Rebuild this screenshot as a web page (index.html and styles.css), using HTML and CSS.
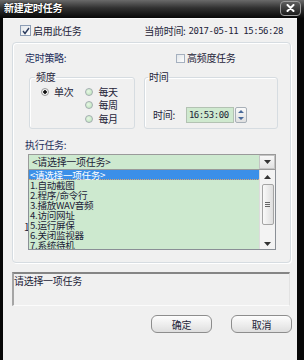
FILE: index.html
```html
<!DOCTYPE html>
<html lang="zh-CN">
<head>
    <meta charset="UTF-8">
    <title>新建定时任务</title>
    <link rel="stylesheet" href="styles.css">
</head>
<body>

<div class="window">
    <div class="titlebar">
        <span class="title">新建定时任务</span>
        <span class="close-btn">
            <svg width="9" height="8" viewBox="0 0 9 8"><path d="M1.5 1 L7.5 7 M7.5 1 L1.5 7" stroke="#fff" stroke-width="2" stroke-linecap="round"/></svg>
        </span>
    </div>

    <div class="client">
        <div class="top-row">
            <div class="check">
                <span class="box big">
                    <svg width="8" height="8" viewBox="0 0 8 8"><path d="M1 4 L3 6.5 L7 1" fill="none" stroke="#2b3b5e" stroke-width="1.4"/></svg>
                </span>
                启用此任务
            </div>
            <div class="now">当前时间:<span class="mono now-time">2017-05-11 15:56:28</span></div>
        </div>

        <div class="panel">
            <div class="panel-head">
                <span class="label">定时策略:</span>
                <div class="check"><span class="box small"></span>高频度任务</div>
            </div>

            <div class="groups">
                <fieldset class="group freq">
                    <legend>频度</legend>
                    <div class="radios">
                        <div class="col">
                            <div class="radio-row"><span class="radio on"></span>单次</div>
                        </div>
                        <div class="col second">
                            <div class="radio-row"><span class="radio"></span>每天</div>
                            <div class="radio-row"><span class="radio"></span>每周</div>
                            <div class="radio-row"><span class="radio"></span>每月</div>
                        </div>
                    </div>
                </fieldset>
                <fieldset class="group time">
                    <legend>时间</legend>
                    <div class="time-row">
                        <span>时间:</span>
                        <span class="time-input mono">16:53:00</span>
                        <span class="spin">
                            <svg width="8" height="14" viewBox="0 0 8 14"><path d="M1 5 L4 2 L7 5 Z M1 9 L4 12 L7 9 Z" fill="#4a6a9a"/></svg>
                        </span>
                    </div>
                </fieldset>
            </div>

            <div class="label task-label">执行任务:</div>
            <div class="combo-wrap">
                <div class="combo">
                    <span class="combo-text">&lt;请选择一项任务&gt;</span>
                    <span class="drop-btn">
                        <svg width="7" height="4" viewBox="0 0 7 4"><path d="M0 0 L7 0 L3.5 4 Z" fill="#333"/></svg>
                    </span>
                </div>

                <!-- open dropdown list -->
                <div class="list">
                    <div class="items">
                        <div class="item selected">&lt;请选择一项任务&gt;</div>
                        <div class="item">1.自动截图</div>
                        <div class="item">2.程序/命令行</div>
                        <div class="item">3.播放WAV音频</div>
                        <div class="item">4.访问网址</div>
                        <div class="item">5.运行屏保</div>
                        <div class="item">6.关闭监视器</div>
                        <div class="item">7.系统待机</div>
                    </div>
                    <div class="scrollbar">
                        <svg width="7" height="4" viewBox="0 0 7 4"><path d="M0 4 L7 4 L3.5 0 Z" fill="#333"/></svg>
                        <div class="thumb"><span></span><span></span><span></span></div>
                        <svg class="down" width="7" height="4" viewBox="0 0 7 4"><path d="M0 0 L7 0 L3.5 4 Z" fill="#333"/></svg>
                    </div>
                </div>
            </div>
            <div class="under">1</div>
        </div>

        <div class="status">请选择一项任务</div>

        <div class="buttons">
            <button class="btn">确定</button>
            <button class="btn">取消</button>
        </div>
    </div>
</div>

</body>
</html>
```

FILE: styles.css
```css
* {
    box-sizing: border-box;
}

body {
    margin: 0;
    background: #000;
    font-family: "Noto Sans CJK SC", sans-serif;
    font-size: 10px;
    letter-spacing: -0.3px;
    color: #1d2338;
}

.mono {
    font-family: "DejaVu Sans Mono", monospace;
    font-size: 9px;
    letter-spacing: -0.45px;
}

.window {
    width: 304px;
    height: 360px;
    display: flex;
    flex-direction: column;
    background: #060606;
}

/* Title bar */
.titlebar {
    height: 18px;
    display: flex;
    align-items: center;
    justify-content: space-between;
    padding: 0 3px 0 4px;
    background: linear-gradient(#6a6a6a, #303030 45%, #080808);
}

.title {
    color: #fff;
    font-weight: bold;
    line-height: 12px;
    margin-top: -2px;
    text-shadow: 0 0 2px #000;
}

.close-btn {
    width: 21px;
    height: 15px;
    margin-top: -2px;
    display: flex;
    align-items: center;
    justify-content: center;
    border: 1px solid #9c9c9c;
    border-radius: 4px;
    background: linear-gradient(#5e5e5e, #1c1c1c);
}

/* Client area */
.client {
    flex: 1;
    margin: 0 7px 0 3px;
    display: flex;
    flex-direction: column;
    background: #f0f0f0;
    border-top: 1px solid #fbfbfb;
}

.top-row {
    height: 23px;
    display: flex;
    align-items: center;
    justify-content: space-between;
    padding: 0 14px 0 17px;
}

.check {
    display: flex;
    align-items: center;
    line-height: 12px;
}

.box {
    display: flex;
    align-items: center;
    justify-content: center;
    border: 1px solid #8c9db5;
    background: linear-gradient(135deg, #e2e6ea, #fdfdfd);
    margin-right: 2px;
}

.box.big {
    width: 11px;
    height: 11px;
}

.box.small {
    width: 9px;
    height: 9px;
    border-color: #a5b0bf;
}

.now {
    display: flex;
    align-items: center;
    line-height: 12px;
}

.now-time {
    margin-left: 3px;
}

/* Strategy panel */
.panel {
    width: 279px;
    height: 221px;
    margin-left: 9px;
    padding: 9px 0 0 12px;
    border: 1px solid #d6dce1;
    border-radius: 4px;
    box-shadow: inset 1px 1px 0 #fff, 1px 1px 0 #fff;
}

.panel-head {
    display: grid;
    grid-template-columns: 151px auto;
    align-items: center;
    height: 12px;
    line-height: 12px;
}

.label {
    color: #1f2f5c;
}

.groups {
    display: flex;
    gap: 9px;
    margin: 7px 0 0 4px;
}

.group {
    margin: 0;
    padding: 0;
    height: 58px;
    border: 1px solid #d6dce1;
    border-radius: 3px;
    box-shadow: inset 1px 1px 0 #fff;
}

.group legend {
    padding: 0 1px;
    line-height: 12px;
}

.freq {
    width: 106px;
}

.freq legend {
    margin-left: 5px;
}

.time {
    width: 134px;
}

.time legend {
    margin-left: 3px;
}

.radios {
    display: flex;
    padding: 2px 0 0 11px;
}

.col.second {
    margin-left: 12px;
}

.radio-row {
    height: 13.5px;
    display: flex;
    align-items: center;
    line-height: 12px;
}

.radio {
    width: 8px;
    height: 8px;
    margin-right: 5px;
    border-radius: 50%;
    border: 1px solid #a3aeb0;
    background: radial-gradient(circle at 40% 40%, #e6f6e4, #b9e2b8);
}

.radio.on {
    background: radial-gradient(circle, #111 0 1.5px, #f2f2f2 2px);
    border-color: #9a9a9a;
}

.time-row {
    display: flex;
    align-items: center;
    height: 16px;
    margin-top: 24px;
    padding-left: 8px;
    line-height: 12px;
}

.time-input {
    width: 48px;
    height: 16px;
    margin-left: 11px;
    padding-left: 2px;
    line-height: 14px;
    border: 1px solid #b3c2b3;
    background: #cfe9cf;
}

.spin {
    width: 12px;
    height: 16px;
    margin-left: 1px;
    display: flex;
    align-items: center;
    justify-content: center;
    border: 1px solid #a8b0b8;
    border-radius: 2px;
    background: linear-gradient(#fafafa, #e0e0e0);
}

.task-label {
    margin-top: 10px;
    line-height: 12px;
}

/* Combo box */
.combo-wrap {
    position: relative;
    z-index: 1;
    width: 248px;
    margin: 3px 0 0 3px;
}

.combo {
    height: 16px;
    display: flex;
    border: 1px solid #9a9a9a;
    background: #cde9cf;
}

.combo-text {
    flex: 1;
    padding-left: 3px;
    line-height: 14px;
}

.drop-btn {
    width: 16px;
    display: flex;
    align-items: center;
    justify-content: center;
    border: 1px solid #c4c4c4;
    background: linear-gradient(#f8f8f8, #e2e2e2);
}

.list {
    position: absolute;
    top: 16px;
    left: 0;
    width: 248px;
    height: 80px;
    display: flex;
    overflow: hidden;
    border: 1px solid #8a8f96;
    border-top: none;
    background: #cde9cf;
}

.items {
    flex: 1;
    font-size: 9.6px;
}

.item {
    height: 10px;
    line-height: 10px;
    padding-left: 1px;
    white-space: nowrap;
}

.item.selected {
    background: #3b8fe8;
    color: #fff;
    border-bottom: 1px dotted #d9a46a;
}

.scrollbar {
    width: 16px;
    display: flex;
    flex-direction: column;
    align-items: center;
    padding-top: 5px;
    border-left: 1px solid #dcdcdc;
    background: #f3f3f3;
}

.thumb {
    width: 12px;
    height: 41px;
    margin-top: 5px;
    display: flex;
    flex-direction: column;
    align-items: center;
    justify-content: center;
    gap: 1px;
    border: 1px solid #a5a5a5;
    border-radius: 2px;
    background: linear-gradient(90deg, #fafafa, #dedede);
}

.thumb span {
    width: 5px;
    height: 1px;
    background: #666;
}

.scrollbar .down {
    margin-top: 17px;
}

.under {
    margin: 51px 0 0 -1px;
    line-height: 12px;
}

/* Status box */
.status {
    width: 278px;
    height: 34px;
    margin: 9px 0 0 9px;
    line-height: 13px;
    border-top: 2px solid #858585;
    border-left: 2px solid #a5a5a5;
    border-right: 1px solid #e2e2e2;
    border-bottom: 1px solid #fbfbfb;
}

/* Buttons */
.buttons {
    display: flex;
    justify-content: flex-end;
    gap: 19px;
    margin-top: 9px;
    padding-right: 5px;
}

.btn {
    width: 61px;
    height: 18px;
    padding: 0;
    font-family: inherit;
    font-size: 10px;
    letter-spacing: -0.3px;
    color: #1d2338;
    border: 1px solid #8d8d8d;
    border-radius: 6px;
    background: linear-gradient(#fdfdfd, #ebebeb 60%, #dedede);
}
```
